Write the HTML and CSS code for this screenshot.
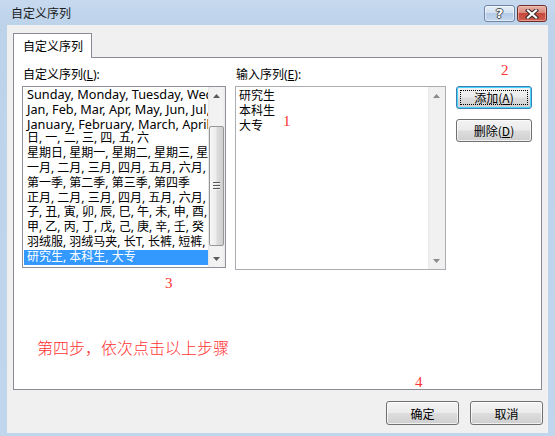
FILE: index.html
```html
<!DOCTYPE html>
<html>
<head>
<meta charset="utf-8">
<title>自定义序列</title>
<link rel="stylesheet" href="styles.css">
</head>
<body>
<div class="window">
  <div class="titlebar">
    <span class="title">自定义序列</span>
    <div class="caption">
      <div class="cbtn help"><span class="qmark">?</span></div>
      <div class="cbtn close">
        <svg width="14" height="10" viewBox="0 0 14 10">
          <path d="M3 1.5 L11 8.5 M11 1.5 L3 8.5" stroke="#3a2a2a" stroke-width="4.2" stroke-linecap="square" fill="none"/>
          <path d="M3 1.5 L11 8.5 M11 1.5 L3 8.5" stroke="#ffffff" stroke-width="2.2" stroke-linecap="square" fill="none"/>
        </svg>
      </div>
    </div>
  </div>
  <div class="client">
    <div class="tabs"><div class="tab">自定义序列</div></div>
    <div class="panel">
      <div class="col col-left">
        <div class="label">自定义序列(<u>L</u>):</div>
        <div class="listbox">
          <div class="items">
            <div class="item latin">Sunday, Monday, Tuesday, Wednesday, Thursday, Friday, Saturday</div>
            <div class="item latin">Jan, Feb, Mar, Apr, May, Jun, Jul, Aug, Sep, Oct, Nov, Dec</div>
            <div class="item latin">January, February, March, April, May, June, July</div>
            <div class="item">日, 一, 二, 三, 四, 五, 六</div>
            <div class="item">星期日, 星期一, 星期二, 星期三, 星期四, 星期五, 星期六</div>
            <div class="item">一月, 二月, 三月, 四月, 五月, 六月, 七月, 八月</div>
            <div class="item">第一季, 第二季, 第三季, 第四季</div>
            <div class="item">正月, 二月, 三月, 四月, 五月, 六月, 七月, 八月</div>
            <div class="item">子, 丑, 寅, 卯, 辰, 巳, 午, 未, 申, 酉, 戌, 亥</div>
            <div class="item">甲, 乙, 丙, 丁, 戊, 己, 庚, 辛, 壬, 癸</div>
            <div class="item">羽绒服, 羽绒马夹, 长T, 长裤, 短裤, 衬衫</div>
            <div class="item sel">研究生, 本科生, 大专</div>
          </div>
          <div class="vscroll">
            <div class="arrow"><svg width="7" height="4" viewBox="0 0 7 4"><polygon points="3.5,0 7,4 0,4" fill="#5a5a5a"/></svg></div>
            <div class="gap-top"></div>
            <div class="thumb"><i></i><i></i><i></i></div>
            <div class="gap-bottom"></div>
            <div class="arrow"><svg width="7" height="4" viewBox="0 0 7 4"><polygon points="0,0 7,0 3.5,4" fill="#5a5a5a"/></svg></div>
          </div>
        </div>
      </div>
      <div class="col col-right">
        <div class="label">输入序列(<u>E</u>):</div>
        <div class="textbox">
          <div class="text">研究生<br>本科生<br>大专</div>
          <div class="vscroll">
            <div class="arrow"><svg width="7" height="4" viewBox="0 0 7 4"><polygon points="3.5,0 7,4 0,4" fill="#8a8a8a"/></svg></div>
            <div class="track"></div>
            <div class="arrow"><svg width="7" height="4" viewBox="0 0 7 4"><polygon points="0,0 7,0 3.5,4" fill="#8a8a8a"/></svg></div>
          </div>
        </div>
      </div>
      <div class="btncol">
        <button class="btn focused"><span class="focusrect">添加(<u>A</u>)</span></button>
        <button class="btn">删除(<u>D</u>)</button>
      </div>
    </div>
    <div class="footer">
      <button class="btn wide">确定</button>
      <button class="btn wide">取消</button>
    </div>
  </div>

  <span class="note num n1">1</span>
  <span class="note num n2">2</span>
  <span class="note num n3">3</span>
  <span class="note num n4">4</span>
  <span class="note step">第四步，依次点击以上步骤</span>
</div>
</body>
</html>
```

FILE: styles.css
```css
html, body {
  margin: 0;
  padding: 0;
}

body {
  width: 555px;
  height: 436px;
  overflow: hidden;
  font-family: "Noto Sans", "Noto Sans CJK SC", sans-serif;
  font-size: 12px;
  color: #000;
}

.window {
  position: relative;
  width: 555px;
  height: 436px;
  box-sizing: border-box;
  display: flex;
  flex-direction: column;
  background: linear-gradient(#c6d9ef, #bdd3ea 25px, #c0d6ed);
}

/* title bar */
.titlebar {
  height: 25px;
  flex: none;
  display: flex;
  align-items: flex-start;
  padding: 0 8px 0 11px;
}

.title {
  line-height: 25px;
  color: #1b1b1b;
  font-family: "Noto Sans CJK SC", sans-serif;
}

.caption {
  margin-left: auto;
  margin-top: 5px;
  display: flex;
  gap: 2px;
}

.cbtn {
  height: 15px;
  border-radius: 3px;
  display: flex;
  align-items: center;
  justify-content: center;
}

.help {
  width: 29px;
  border: 1px solid #6f86a6;
  background: linear-gradient(#e6eef8 0%, #d3e1f1 45%, #b5cbe6 50%, #c4d7ee 100%);
  box-shadow: inset 0 0 0 1px rgba(255,255,255,0.55);
}

.qmark {
  font-family: "DejaVu Sans", sans-serif;
  font-weight: bold;
  font-size: 13px;
  line-height: 15px;
  color: #fff;
  text-shadow: 1px 0 0 #4a4a4a, -1px 0 0 #4a4a4a, 0 1px 0 #4a4a4a, 0 -1px 0 #4a4a4a;
}

.close {
  width: 28px;
  border: 1px solid #6e2f2a;
  background: linear-gradient(#eab0a6 0%, #d9897c 45%, #c4493b 50%, #cf5d4e 100%);
  box-shadow: inset 0 0 0 1px rgba(255,210,200,0.5);
}

/* client area */
.client {
  margin: 0 7px 3px;
  height: 408px;
  box-sizing: border-box;
  background: #f0f0f0;
  padding: 8px 6px 0 6px;
  display: flex;
  flex-direction: column;
}

.tabs {
  display: flex;
}

.tab {
  position: relative;
  z-index: 1;
  width: 79px;
  height: 25px;
  box-sizing: border-box;
  border: 1px solid #898c95;
  border-bottom: none;
  background: #fff;
  margin-bottom: -1px;
  padding-left: 9px;
  line-height: 23px;
  font-family: "Noto Sans CJK SC", sans-serif;
}

.panel {
  height: 333px;
  box-sizing: border-box;
  border: 1px solid #898c95;
  background: #fff;
  padding: 9px 9px 0 8px;
  display: flex;
  align-items: flex-start;
}

.col {
  display: flex;
  flex-direction: column;
}

.col-left {
  width: 204px;
  margin-right: 9px;
}

.col-right {
  width: 211px;
  margin-right: 10px;
}

.label {
  height: 15px;
  line-height: 15px;
  margin-bottom: 4px;
  padding-left: 1px;
}

/* list box */
.listbox {
  height: 182px;
  box-sizing: border-box;
  border: 1px solid #8e9197;
  display: flex;
}

.items {
  flex: 1;
  min-width: 0;
  overflow: hidden;
  padding-left: 1px;
}

.item {
  height: 14.8px;
  line-height: 14.8px;
  white-space: nowrap;
  padding-left: 3px;
}

.item.latin {
  font-size: 12.7px;
}

.item.sel {
  background: #3399ff;
  color: #fff;
}

.vscroll {
  width: 17px;
  flex: none;
  display: flex;
  flex-direction: column;
  background: linear-gradient(to right, #e4e4e4 0, #f1f1f1 2px, #f3f3f3 80%, #ebebeb 100%);
}

.arrow {
  height: 17px;
  flex: none;
  display: flex;
  align-items: center;
  justify-content: center;
}

.gap-top {
  height: 22px;
}

.gap-bottom {
  height: 4px;
}

.thumb {
  height: 120px;
  box-sizing: border-box;
  margin: 0 1px 0 1px;
  border: 1px solid #979797;
  border-radius: 2px;
  background: linear-gradient(to right, #f6f6f6 0%, #ececec 45%, #dcdcdc 55%, #cfcfcf 100%);
  display: flex;
  flex-direction: column;
  align-items: center;
  justify-content: center;
  gap: 1px;
}

.thumb i {
  display: block;
  width: 7px;
  height: 1px;
  background: #555;
  border-bottom: 1px solid #f4f4f4;
}

.track {
  flex: 1;
}

/* text box */
.textbox {
  height: 184px;
  box-sizing: border-box;
  border: 1px solid #abadb3;
  display: flex;
}

.text {
  flex: 1;
  padding: 0 0 0 3px;
  line-height: 15.2px;
  font-family: "Noto Sans CJK SC", sans-serif;
}

.textbox .vscroll {
  background: linear-gradient(to right, #e8e8e8 0, #f1f1f1 2px, #f0f0f0 100%);
}

/* buttons */
.btncol {
  width: 76px;
  display: flex;
  flex-direction: column;
  gap: 10px;
  margin-top: 19px;
}

.btn {
  position: relative;
  width: 76px;
  height: 23px;
  box-sizing: border-box;
  border: 1px solid #707070;
  border-radius: 3px;
  background: linear-gradient(#f3f3f3 0%, #ebebeb 48%, #dddddd 52%, #cfcfcf 100%);
  box-shadow: inset 0 0 0 1px rgba(255,255,255,0.7);
  font-family: "Noto Sans CJK SC", sans-serif;
  font-size: 12px;
  color: #000;
  padding: 0;
  display: flex;
  align-items: center;
  justify-content: center;
}

.btn u, .label u {
  text-decoration: underline;
  text-underline-offset: 1px;
}

.btn.focused {
  border-color: #3c7fb1;
  box-shadow: inset 0 0 0 1px #48d4ff;
}

.focusrect::after {
  content: "";
  position: absolute;
  left: 3px;
  top: 3px;
  right: 3px;
  bottom: 3px;
  border: 1px dotted #000;
}

.footer {
  display: flex;
  justify-content: flex-end;
  gap: 11px;
  margin-top: 11px;
  margin-right: -1px;
}

.btn.wide {
  width: 73px;
  height: 24px;
}

/* red annotations overlaid on the screenshot */
.note {
  position: absolute;
  color: #ff3333;
  white-space: nowrap;
}

.num {
  font-family: "Liberation Serif", serif;
  font-size: 15px;
  line-height: 15px;
}

.n1 { left: 283px; top: 114px; }
.n2 { left: 501px; top: 63px; }
.n3 { left: 165px; top: 276px; }
.n4 { left: 415px; top: 375px; }

.step {
  left: 37px;
  top: 339px;
  font-family: "Noto Sans CJK SC", sans-serif;
  font-size: 16px;
  line-height: 16px;
  font-weight: 300;
}
```
